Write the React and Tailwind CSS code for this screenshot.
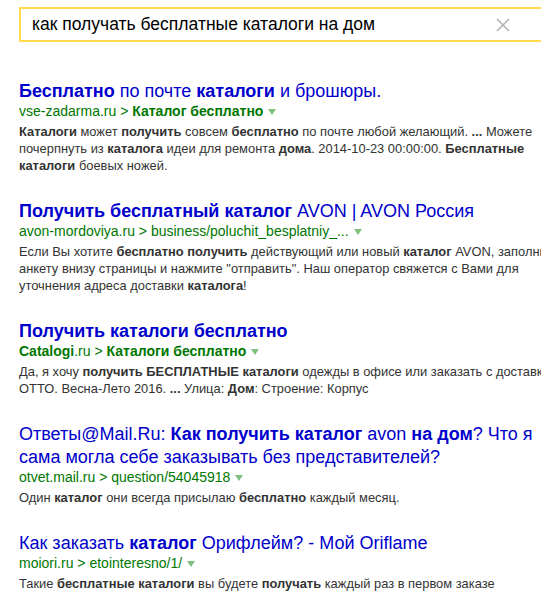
import React from 'react';

// each part is [text, bold]
const results = [
    {
        title: [['Бесплатно', 1], [' по почте ', 0], ['каталоги', 1], [' и брошюры.', 0]],
        url: [['vse-zadarma.ru', 0], [' > ', 0], ['Каталог бесплатно', 1]],
        snippet: [
            [['Каталоги', 1], [' может ', 0], ['получить', 1], [' совсем ', 0], ['бесплатно', 1], [' по почте любой желающий. ', 0], ['...', 1], [' Можете', 0]],
            [['почерпнуть из ', 0], ['каталога', 1], [' идеи для ремонта ', 0], ['дома', 1], ['. 2014-10-23 00:00:00. ', 0], ['Бесплатные', 1]],
            [['каталоги', 1], [' боевых ножей.', 0]],
        ],
    },
    {
        title: [['Получить бесплатный каталог', 1], [' AVON | AVON Россия', 0]],
        url: [['avon-mordoviya.ru', 0], [' > ', 0], ['business/poluchit_besplatniy_...', 0]],
        snippet: [
            [['Если Вы хотите ', 0], ['бесплатно получить', 1], [' действующий или новый ', 0], ['каталог', 1], [' AVON, заполните', 0]],
            [['анкету внизу страницы и нажмите "отправить". Наш оператор свяжется с Вами для', 0]],
            [['уточнения адреса доставки ', 0], ['каталога', 1], ['!', 0]],
        ],
    },
    {
        title: [['Получить каталоги бесплатно', 1]],
        url: [['Catalogi', 1], ['.ru', 0], [' > ', 0], ['Каталоги бесплатно', 1]],
        snippet: [
            [['Да, я хочу ', 0], ['получить БЕСПЛАТНЫЕ каталоги', 1], [' одежды в офисе или заказать с доставкой', 0]],
            [['ОТТО. Весна-Лето 2016. ', 0], ['...', 1], [' Улица: ', 0], ['Дом', 1], [': Строение: Корпус', 0]],
        ],
    },
    {
        title: [['Ответы@Mail.Ru: ', 0], ['Как получить каталог', 1], [' avon ', 0], ['на дом', 1], ['? Что я', 0]],
        title2: [['сама могла себе заказывать без представителей?', 0]],
        url: [['otvet.mail.ru', 0], [' > ', 0], ['question/54045918', 0]],
        snippet: [
            [['Один ', 0], ['каталог', 1], [' они всегда присылаю ', 0], ['бесплатно', 1], [' каждый месяц.', 0]],
        ],
    },
    {
        title: [['Как заказать ', 0], ['каталог', 1], [' Орифлейм? - Мой Oriflame', 0]],
        url: [['moiori.ru', 0], [' > ', 0], ['etointeresno/1/', 0]],
        snippet: [
            [['Такие ', 0], ['бесплатные каталоги', 1], [' вы будете ', 0], ['получать', 1], [' каждый раз в первом заказе', 0]],
        ],
    },
];

function Parts({ parts }) {
    return parts.map(([t, b], i) => (b ? <b key={i} className="font-bold">{t}</b> : <span key={i}>{t}</span>));
}

export default function App() {
    return (
        <div className="w-[541px] h-[594px] overflow-hidden bg-white font-['Liberation_Sans',Arial,sans-serif]">
            <div className="pt-[7px] pl-[19px]">
                <div className="w-[540px] h-[35px] border-2 border-[#ffdb4d] flex items-center pl-[11px]">
                    <span className="text-[17.5px] text-black whitespace-nowrap">как получать бесплатные каталоги на дом</span>
                    <svg className="ml-auto mr-[47px]" width="14" height="14" viewBox="0 0 14 14">
                        <path d="M1 1 L13 13 M13 1 L1 13" stroke="#b3b3b3" strokeWidth="1.6" />
                    </svg>
                </div>
            </div>

            <div className="pl-[19px] pt-[38px] flex flex-col gap-[26px]">
                {results.map((r, i) => (
                    <div key={i} className="whitespace-nowrap">
                        <div className="text-[18px] leading-[23px] text-[#0000cc]">
                            <Parts parts={r.title} />
                        </div>
                        {r.title2 && (
                            <div className="text-[18px] leading-[23px] text-[#0000cc]">
                                <Parts parts={r.title2} />
                            </div>
                        )}
                        <div className="text-[14px] leading-[17px] text-[#007700] flex items-center">
                            <span><Parts parts={r.url} /></span>
                            <svg className="ml-[5px]" width="8" height="6" viewBox="0 0 8 6">
                                <path d="M0 0 L8 0 L4 6 Z" fill="#80c080" />
                            </svg>
                        </div>
                        <div className="mt-[3px] text-[12.9px] leading-[17px] text-[#333]">
                            {r.snippet.map((line, j) => (
                                <div key={j}><Parts parts={line} /></div>
                            ))}
                        </div>
                    </div>
                ))}
            </div>
        </div>
    );
}
